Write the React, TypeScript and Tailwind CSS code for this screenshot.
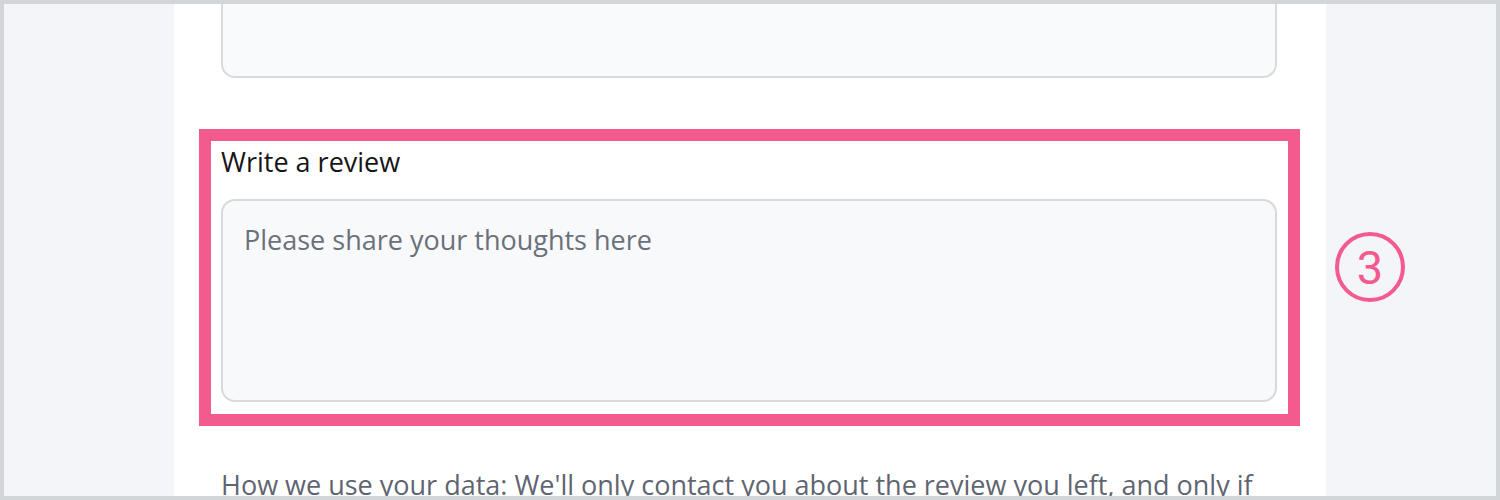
import React from 'react';

const App = () => {
  return (
    <div className="w-[1500px] h-[500px] overflow-hidden border-4 border-[#d3d6d9] bg-[#f3f5f8] font-['Open_Sans',sans-serif]">
      <div className="relative ml-[170px] flex h-full w-[1152px] flex-col bg-white pl-[47px] pr-[49px]">
        {/* previous field, mostly scrolled out */}
        <div className="-mt-[30px] h-[104px] shrink-0 rounded-[14px] border-2 border-[#d9dadb] bg-[#f9fafb]" />

        <div className="mt-[51px] -ml-[22px] -mr-[23px] shrink-0 border-[12px] border-[#f35a8d] pl-[10px] pr-[11px] pt-[3px] pb-[12px]">
          <label className="block text-[27px] leading-[36px] text-[#161616]">Write a review</label>
          <textarea
            placeholder="Please share your thoughts here"
            className="mt-[19px] block h-[203px] w-full resize-none rounded-[14px] border-2 border-[#d7dadd] bg-[#f8f9fb] px-[21px] py-[21px] text-[27px] leading-[36px] text-[#6b717a] outline-none placeholder:text-[#6b717a]"
          />
        </div>

        <div className="absolute left-[1161px] top-[228px] flex h-[70px] w-[70px] items-center justify-center rounded-full border-4 border-[#f35a8d] font-['Roboto',sans-serif] text-[47px] font-normal leading-none text-[#f35a8d]">
          3
        </div>

        <p className="mt-[41px] shrink-0 whitespace-nowrap text-[27px] leading-[36px] text-[#5f6570]">
          How we use your data: We'll only contact you about the review you left, and only if
        </p>
      </div>
    </div>
  );
};

export default App;
